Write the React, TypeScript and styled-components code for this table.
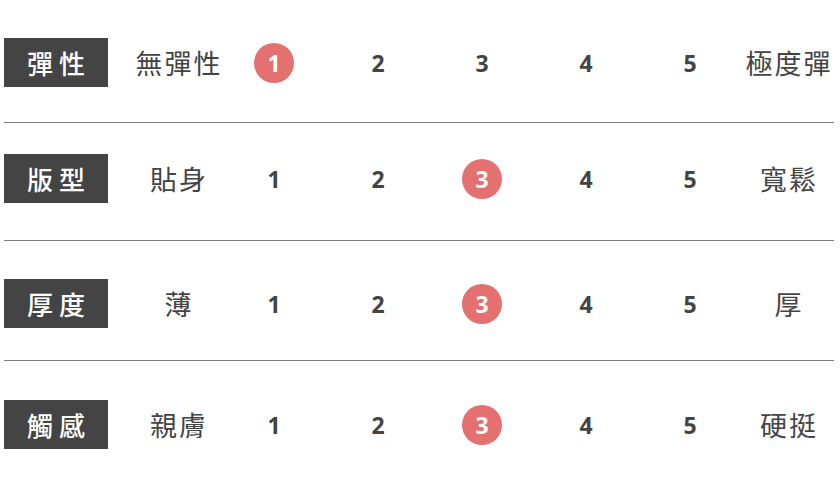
import styled, { createGlobalStyle } from 'styled-components'

const GlobalStyle = createGlobalStyle`
  body {
    margin: 0;
    background: #fff;
    font-family: 'Noto Sans CJK TC', 'Noto Sans', sans-serif;
  }
`

const Table = styled.div`
  width: 830px;
  margin-left: 4px;
  padding-top: 38px;
`

const Row = styled.div<{ $top: number; $bottom: number }>`
  display: grid;
  grid-template-columns: 130px 88px repeat(5, 104px) 1fr;
  align-items: center;
  height: 49px;
  padding: ${(p) => p.$top}px 0 ${(p) => p.$bottom}px;
  border-bottom: 1px solid #7d7d7d;

  &:last-child {
    border-bottom: none;
  }
`

const Label = styled.div`
  width: 104px;
  height: 49px;
  background-color: #444;
  color: #fff;
  font-size: 26px;
  font-weight: 500;
  letter-spacing: 6px;
  display: flex;
  align-items: center;
  justify-content: center;
  padding-left: 6px;
  box-sizing: border-box;
`

const Side = styled.div`
  justify-self: center;
  white-space: nowrap;
  color: #444;
  font-size: 27px;
  letter-spacing: 2px;
  padding-left: 2px;
`

const Score = styled.div<{ $active?: boolean }>`
  justify-self: center;
  width: 40px;
  height: 40px;
  border-radius: 50%;
  display: flex;
  align-items: center;
  justify-content: center;
  font-family: 'Open Sans', 'Liberation Sans', sans-serif;
  font-size: 23px;
  font-weight: 700;
  color: ${(p) => (p.$active ? '#fff' : '#444')};
  background-color: ${(p) => (p.$active ? '#e57070' : 'transparent')};
`

const rows = [
  { label: '彈性', low: '無彈性', high: '極度彈', value: 1, top: 0, bottom: 35 },
  { label: '版型', low: '貼身', high: '寬鬆', value: 3, top: 31, bottom: 37 },
  { label: '厚度', low: '薄', high: '厚', value: 3, top: 38, bottom: 32 },
  { label: '觸感', low: '親膚', high: '硬挺', value: 3, top: 39, bottom: 0 },
]

const App = () => (
  <>
    <GlobalStyle />
    <Table>
      {rows.map((r) => (
        <Row key={r.label} $top={r.top} $bottom={r.bottom}>
          <Label>{r.label}</Label>
          <Side>{r.low}</Side>
          {[1, 2, 3, 4, 5].map((n) => (
            <Score key={n} $active={n === r.value}>
              {n}
            </Score>
          ))}
          <Side>{r.high}</Side>
        </Row>
      ))}
    </Table>
  </>
)

export default App
